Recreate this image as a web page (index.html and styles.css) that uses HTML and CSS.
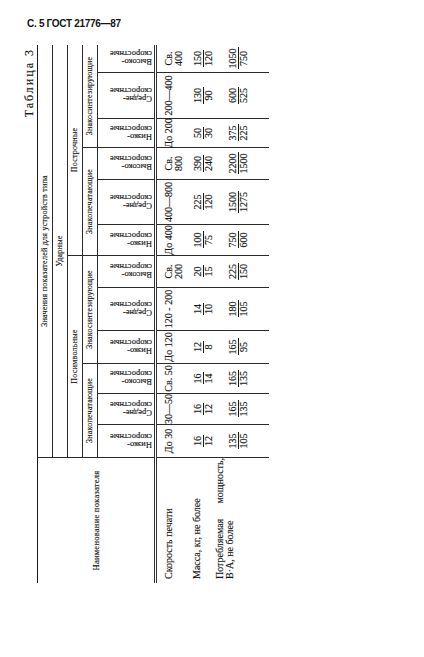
FILE: index.html
```html
<!DOCTYPE html>
<html lang="ru">
<head>
<meta charset="utf-8">
<title>ГОСТ 21776—87, таблица 3</title>
<link rel="stylesheet" href="styles.css">
</head>
<body>
<div class="page">
  <div class="running-head">С. 5 ГОСТ 21776—87</div>
  <div class="rot-wrap">
    <div class="rot">
      <div class="caption">Таблица 3</div>
      <div class="thead">
        <div class="hc h-name">Наименование показателя</div>
        <div class="hc h1">Значения показателей для устройств типа</div>
        <div class="hc h2">Ударные</div>
        <div class="hc h3 g1">Посимвольные</div>
        <div class="hc h3 g2">Построчные</div>
        <div class="hc h4 s1">Знакопечатающие</div>
        <div class="hc h4 s2">Знакосинтезирующие</div>
        <div class="hc h4 s3">Знакопечатающие</div>
        <div class="hc h4 s4">Знакосинтезирующие</div>
        <div class="h5"><span class="vt">Низко-<br>скоростные</span></div>
        <div class="h5"><span class="vt">Средне-<br>скоростные</span></div>
        <div class="h5"><span class="vt">Высоко-<br>скоростные</span></div>
        <div class="h5"><span class="vt">Низко-<br>скоростные</span></div>
        <div class="h5"><span class="vt">Средне-<br>скоростные</span></div>
        <div class="h5"><span class="vt">Высоко-<br>скоростные</span></div>
        <div class="h5"><span class="vt">Низко-<br>скоростные</span></div>
        <div class="h5"><span class="vt">Средне-<br>скоростные</span></div>
        <div class="h5"><span class="vt">Высоко-<br>скоростные</span></div>
        <div class="h5"><span class="vt">Низко-<br>скоростные</span></div>
        <div class="h5"><span class="vt">Средне-<br>скоростные</span></div>
        <div class="h5 last"><span class="vt">Высоко-<br>скоростные</span></div>
      </div>
      <div class="tbody">
        <div class="td lab r1">Скорость печати</div>
        <div class="td r1">До 30</div>
        <div class="td r1">30—50</div>
        <div class="td r1">Св. 50</div>
        <div class="td r1">До 120</div>
        <div class="td r1">120 - 200</div>
        <div class="td r1">Св.<br>200</div>
        <div class="td r1">До 400</div>
        <div class="td r1">400—800</div>
        <div class="td r1">Св.<br>800</div>
        <div class="td r1">До 200</div>
        <div class="td r1">200—400</div>
        <div class="td r1 last">Св.<br>400</div>

        <div class="td lab r2">Масса, кг, не более</div>
        <div class="td r2"><span class="fr"><span class="n">16</span><span class="d">12</span></span></div>
        <div class="td r2"><span class="fr"><span class="n">16</span><span class="d">12</span></span></div>
        <div class="td r2"><span class="fr"><span class="n">16</span><span class="d">14</span></span></div>
        <div class="td r2"><span class="fr"><span class="n">12</span><span class="d">8</span></span></div>
        <div class="td r2"><span class="fr"><span class="n">14</span><span class="d">10</span></span></div>
        <div class="td r2"><span class="fr"><span class="n">20</span><span class="d">15</span></span></div>
        <div class="td r2"><span class="fr"><span class="n">100</span><span class="d">75</span></span></div>
        <div class="td r2"><span class="fr"><span class="n">225</span><span class="d">120</span></span></div>
        <div class="td r2"><span class="fr"><span class="n">390</span><span class="d">240</span></span></div>
        <div class="td r2"><span class="fr"><span class="n">50</span><span class="d">30</span></span></div>
        <div class="td r2"><span class="fr"><span class="n">130</span><span class="d">90</span></span></div>
        <div class="td r2 last"><span class="fr"><span class="n">150</span><span class="d">120</span></span></div>

        <div class="td lab r3">Потребляемая мощность, В·А, не более</div>
        <div class="td r3"><span class="fr"><span class="n">135</span><span class="d">105</span></span></div>
        <div class="td r3"><span class="fr"><span class="n">165</span><span class="d">135</span></span></div>
        <div class="td r3"><span class="fr"><span class="n">165</span><span class="d">135</span></span></div>
        <div class="td r3"><span class="fr"><span class="n">165</span><span class="d">95</span></span></div>
        <div class="td r3"><span class="fr"><span class="n">180</span><span class="d">105</span></span></div>
        <div class="td r3"><span class="fr"><span class="n">225</span><span class="d">150</span></span></div>
        <div class="td r3"><span class="fr"><span class="n">750</span><span class="d">600</span></span></div>
        <div class="td r3"><span class="fr"><span class="n">1500</span><span class="d">1275</span></span></div>
        <div class="td r3"><span class="fr"><span class="n">2200</span><span class="d">1500</span></span></div>
        <div class="td r3"><span class="fr"><span class="n">375</span><span class="d">225</span></span></div>
        <div class="td r3"><span class="fr"><span class="n">600</span><span class="d">525</span></span></div>
        <div class="td r3 last"><span class="fr"><span class="n">1050</span><span class="d">750</span></span></div>
      </div>
    </div>
  </div>
</div>
</body>
</html>
```

FILE: styles.css
```css
* {
  box-sizing: border-box;
  margin: 0;
  padding: 0;
}

html, body {
  background: #ffffff;
}

body {
  width: 424px;
  height: 657px;
  overflow: hidden;
  font-family: "Liberation Serif", "Times New Roman", serif;
  color: #161616;
}

.page {
  padding-top: 19px;
}

.running-head {
  margin-left: 27px;
  font-family: "Liberation Sans", Arial, sans-serif;
  font-weight: 700;
  font-size: 10px;
  line-height: 10px;
  letter-spacing: -0.3px;
  color: #141414;
}

.rot-wrap {
  margin: 16px 0 0 18px;
  width: 252px;
  height: 538px;
}

.rot {
  width: 538px;
  height: 252px;
  transform-origin: 0 0;
  transform: rotate(-90deg) translateX(-100%);
  -webkit-text-stroke: 0.15px #161616;
}

.caption {
  height: 19px;
  line-height: 16px;
  padding-top: 3px;
  text-align: right;
  padding-right: 3px;
  font-size: 12px;
  letter-spacing: 2px;
}

.thead,
.tbody {
  display: grid;
  grid-template-columns: 126px 33px 31px 30px 33px 43px 32px 31px 45px 32px 29px 46px 27px;
}

.thead {
  grid-template-rows: 15px 15px 15px 15px 56px;
  border-top: 1.5px solid #1a1a1a;
  font-size: 8px;
}

.hc {
  display: flex;
  align-items: center;
  justify-content: center;
  white-space: nowrap;
  line-height: 10px;
  letter-spacing: 0.25px;
}

.h-name {
  grid-column: 1;
  grid-row: 1 / 6;
  border-right: 1px solid #2a2a2a;
  font-size: 8.5px;
}

.h1 {
  grid-column: 2 / 14;
  grid-row: 1;
  border-bottom: 1px solid #2a2a2a;
}

.h2 {
  grid-column: 2 / 14;
  grid-row: 2;
  border-bottom: 1px solid #2a2a2a;
}

.h3 {
  grid-row: 3;
  border-bottom: 1px solid #2a2a2a;
}

.g1 {
  grid-column: 2 / 8;
  border-right: 1px solid #2a2a2a;
}

.g2 {
  grid-column: 8 / 14;
}

.h4 {
  grid-row: 4;
  border-bottom: 1px solid #2a2a2a;
}

.s1 { grid-column: 2 / 5; border-right: 1px solid #2a2a2a; }
.s2 { grid-column: 5 / 8; border-right: 1px solid #2a2a2a; }
.s3 { grid-column: 8 / 11; border-right: 1px solid #2a2a2a; }
.s4 { grid-column: 11 / 14; }

.h5 {
  grid-row: 5;
  display: flex;
  justify-content: center;
  align-items: flex-end;
  padding-bottom: 2px;
  border-right: 1px solid #2a2a2a;
}

.h5.last {
  border-right: none;
}

.vt {
  display: block;
  writing-mode: vertical-rl;
  transform: rotate(180deg);
  font-size: 8.5px;
  line-height: 8px;
  white-space: nowrap;
}

.tbody {
  grid-template-rows: 30px 26px 56px;
  border-top: 3px double #333333;
  font-size: 10px;
}

.td {
  display: flex;
  justify-content: center;
  align-items: flex-start;
  border-right: 1px solid #2a2a2a;
  white-space: nowrap;
  line-height: 10px;
  text-align: center;
}

.td.last {
  border-right: none;
}

.r1 { padding-top: 7px; }
.r2 { padding-top: 6px; }
.r3 { padding-top: 14.5px; }

.td.lab {
  display: block;
  white-space: normal;
  text-align: justify;
  padding-left: 4px;
  padding-right: 0;
}

.td.lab.r1 { padding-top: 7px; }
.td.lab.r2 { padding-top: 5px; }
.td.lab.r3 { padding-top: 2px; }

.fr {
  display: inline-flex;
  flex-direction: column;
  line-height: 10px;
  text-align: center;
}

.fr .n {
  border-bottom: 1px solid #1a1a1a;
  padding: 0 1px;
}
```
